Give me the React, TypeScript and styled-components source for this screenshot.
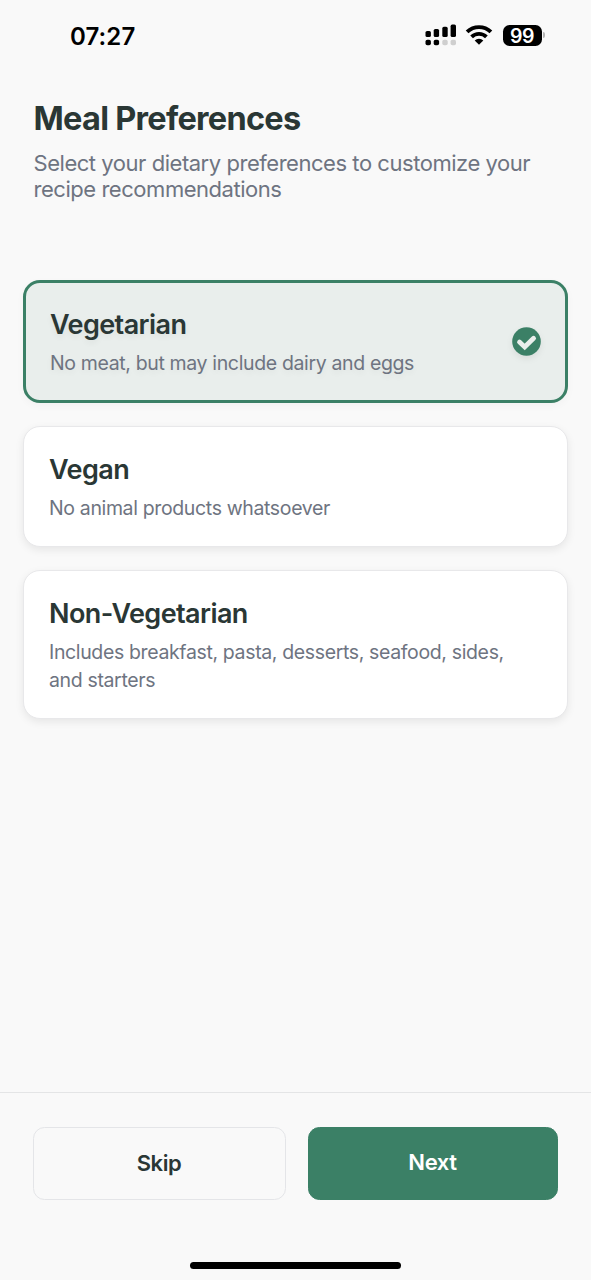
import React from "react";
import styled, { createGlobalStyle, css } from "styled-components";

const GlobalStyle = createGlobalStyle`
  * { box-sizing: border-box; }
  body {
    margin: 0;
    background: #f9f9f9;
    font-family: Inter, "Liberation Sans", sans-serif;
    -webkit-font-smoothing: antialiased;
  }
`;

const Screen = styled.div`
  display: flex;
  flex-direction: column;
  width: 591px;
  height: 1280px;
  background: #f9f9f9;
  overflow: hidden;
`;

const StatusBar = styled.header`
  display: flex;
  align-items: center;
  justify-content: space-between;
  height: 70px;
  padding: 0 46px 0 70px;
`;

const Clock = styled.time`
  padding-top: 3px;
  font-size: 24px;
  font-weight: 600;
  line-height: 30px;
  letter-spacing: 0.1px;
  color: #000;
`;

const StatusIcons = styled.div`
  display: flex;
  align-items: center;
  height: 24px;
`;

const SignalIcon = styled.svg`
  display: block;
  width: 32px;
  height: 24px;
  margin-right: 8px;
`;

const WifiIcon = styled.svg`
  display: block;
  width: 28px;
  height: 24px;
  margin-right: 10px;
`;

const Battery = styled.div`
  width: 39px;
  height: 21px;
  padding-right: 1px;
  border-radius: 6.5px;
  background: #000;
  color: #fff;
  font-size: 19.5px;
  font-weight: 600;
  line-height: 22px;
  text-align: center;
  letter-spacing: -0.4px;
`;

const BatteryCap = styled.div`
  width: 2px;
  height: 6px;
  margin-left: 1px;
  border-radius: 0 2px 2px 0;
  background: #b5b5b5;
`;

const Intro = styled.section`
  height: 210px;
  padding: 29px 34px 0 33.5px;
`;

const Title = styled.h1`
  margin: 0;
  font-size: 32.5px;
  font-weight: 700;
  line-height: 40px;
  letter-spacing: -0.72px;
  color: #2a3735;
`;

const Subtitle = styled.p`
  margin: 11px 0 0;
  font-size: 22px;
  line-height: 26px;
  letter-spacing: -0.46px;
  color: #6e7481;
  white-space: nowrap;
`;

const Options = styled.main`
  display: flex;
  flex: 1;
  flex-direction: column;
  gap: 23px;
  padding: 0 23px;
`;

const Card = styled.article<{ $selected?: boolean }>`
  display: flex;
  align-items: center;
  justify-content: space-between;
  border: 1px solid #e8e8ea;
  border-radius: 17px;
  padding: 25px 25px 24px;
  background: #fff;
  box-shadow: 0 3px 8px rgba(0, 0, 0, 0.08);
  ${({ $selected }) =>
    $selected &&
    css`
      border: 3px solid #3b8066;
      padding: 24px 24px 23px;
      background: #e9eeec;
      box-shadow: 0 3px 8px rgba(0, 0, 0, 0.03);
      text-shadow: 0 3px 6px rgba(0, 0, 0, 0.06);
    `}
`;

const CardTitle = styled.h2`
  margin: 0 0 6px;
  font-size: 27px;
  font-weight: 600;
  line-height: 36px;
  letter-spacing: -0.58px;
  color: #2a3735;
`;

const CardText = styled.p`
  margin: 0;
  font-size: 19.5px;
  line-height: 28px;
  letter-spacing: -0.36px;
  color: #6e7481;
  white-space: nowrap;
`;

const CheckIcon = styled.svg`
  display: block;
  width: 29px;
  height: 29px;
  margin-bottom: 2px;
  overflow: visible;
  filter: drop-shadow(0 3px 3px rgba(0, 0, 0, 0.07));
`;

const Footer = styled.footer`
  display: flex;
  flex-direction: column;
  align-items: center;
  height: 188px;
  border-top: 1px solid #e4e5e6;
`;

const Actions = styled.div`
  display: grid;
  grid-template-columns: 253px 250px;
  gap: 22px;
  width: 100%;
  padding: 34px 33px 0;
`;

const Button = styled.button<{ $primary?: boolean }>`
  height: 73px;
  padding: ${({ $primary }) => ($primary ? "0 1px 3px 0" : "0 1px 1px 0")};
  border: 1px solid ${({ $primary }) => ($primary ? "#3b8066" : "#e4e5e8")};
  border-radius: 11.5px;
  background: ${({ $primary }) => ($primary ? "#3b8066" : "#f9f9f9")};
  color: ${({ $primary }) => ($primary ? "#fff" : "#2a3735")};
  font-family: inherit;
  font-size: 22px;
  font-weight: 600;
  letter-spacing: -0.4px;
`;

const HomeIndicator = styled.div`
  width: 211px;
  height: 7px;
  margin-top: 62px;
  border-radius: 4px;
  background: #000;
`;

const options = [
  {
    title: "Vegetarian",
    lines: ["No meat, but may include dairy and eggs"],
    selected: true,
  },
  {
    title: "Vegan",
    lines: ["No animal products whatsoever"],
  },
  {
    title: "Non-Vegetarian",
    lines: ["Includes breakfast, pasta, desserts, seafood, sides,", "and starters"],
  },
];

const bars = [
  { x: 0.5, y: 7.9, h: 6.2 },
  { x: 8.7, y: 6, h: 8.1 },
  { x: 17.3, y: 3.8, h: 10.3 },
  { x: 25.6, y: 1.6, h: 12.5 },
];

export default function App() {
  return (
    <>
      <GlobalStyle />
      <Screen>
        <StatusBar>
          <Clock>07:27</Clock>
          <StatusIcons>
            <SignalIcon viewBox="0 0 32 24">
              {bars.map((bar, i) => (
                <React.Fragment key={bar.x}>
                  <rect x={bar.x} y={bar.y} width="5.4" height={bar.h} rx="1.6" />
                  <rect x={bar.x} y="16.8" width="5.4" height="5.4" rx="1.8" fill={i < 2 ? "#000" : "#cfcfcf"} />
                </React.Fragment>
              ))}
            </SignalIcon>
            <WifiIcon viewBox="0 0 28 24" fill="none" stroke="#000" strokeWidth="3.9">
              <path d="M2.1 8.9a17.2 17.2 0 0 1 23.8 0" />
              <path d="M6.6 13.8a10.7 10.7 0 0 1 14.8 0" />
              <path d="M14 21.8l-4.3-4.4a6.1 6.1 0 0 1 8.6 0z" fill="#000" stroke="none" />
            </WifiIcon>
            <Battery>99</Battery>
            <BatteryCap />
          </StatusIcons>
        </StatusBar>
        <Intro>
          <Title>Meal Preferences</Title>
          <Subtitle>
            Select your dietary preferences to customize your
            <br />
            recipe recommendations
          </Subtitle>
        </Intro>
        <Options>
          {options.map((option) => (
            <Card key={option.title} $selected={option.selected}>
              <div>
                <CardTitle>{option.title}</CardTitle>
                {option.lines.map((line) => (
                  <CardText key={line}>{line}</CardText>
                ))}
              </div>
              {option.selected && (
                <CheckIcon viewBox="0 0 29 29">
                  <circle cx="14.5" cy="14.5" r="14.3" fill="#3b8066" />
                  <path
                    d="M7.5 15.1l5.2 4.8 8.9-8.6"
                    fill="none"
                    stroke="#e9eeec"
                    strokeWidth="4.8"
                    strokeLinecap="round"
                    strokeLinejoin="miter"
                  />
                </CheckIcon>
              )}
            </Card>
          ))}
        </Options>
        <Footer>
          <Actions>
            <Button>Skip</Button>
            <Button $primary>Next</Button>
          </Actions>
          <HomeIndicator />
        </Footer>
      </Screen>
    </>
  );
}
